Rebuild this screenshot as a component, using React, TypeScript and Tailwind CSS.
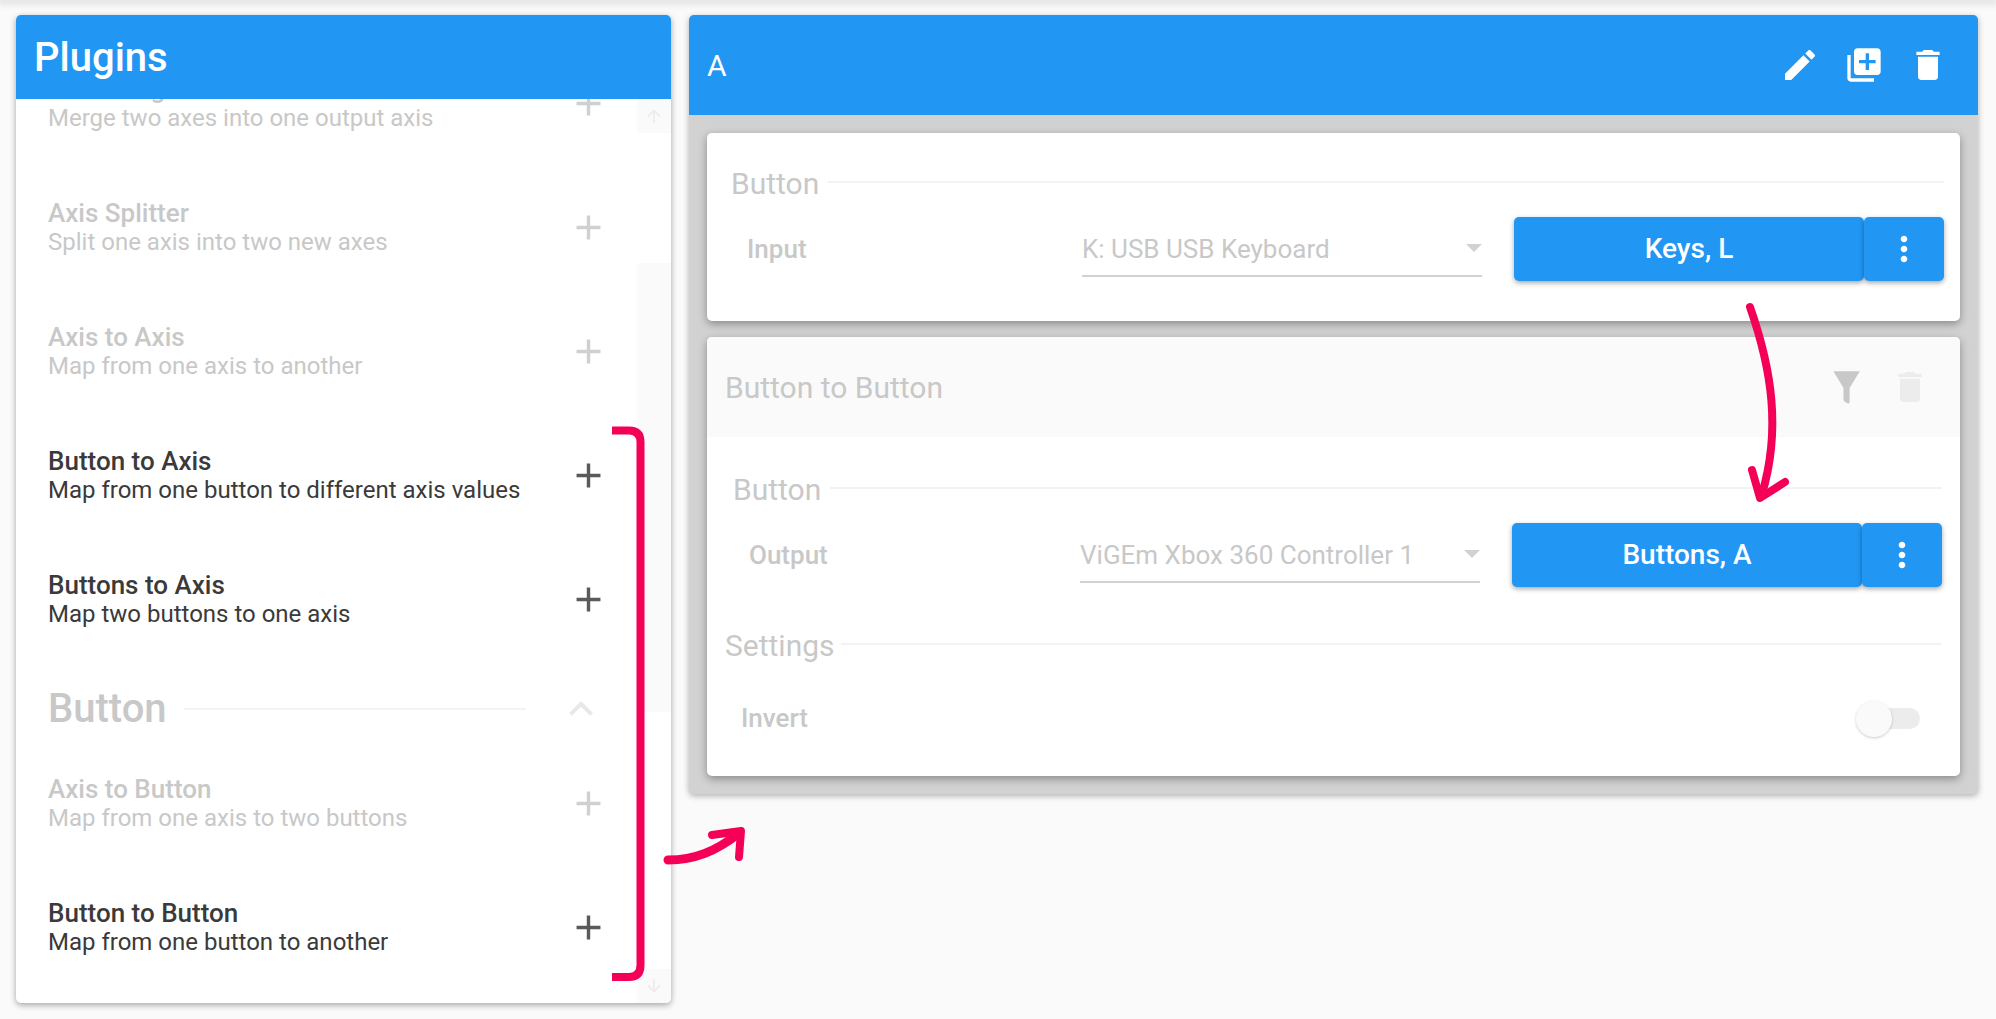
import React from 'react';

const ROBOTO = "font-['Roboto',sans-serif]";

function Glyph({ d, size = 40, className = '' }: { d: string; size?: number; className?: string }) {
    return (
        <svg width={size} height={size} viewBox="0 0 24 24" fill="currentColor" className={`shrink-0 ${className}`}>
            <path d={d} />
        </svg>
    );
}

const ICONS = {
    add: 'M19 13h-6v6h-2v-6H5v-2h6V5h2v6h6v2z',
    edit: 'M3 17.25V21h3.75L17.81 9.94l-3.75-3.75L3 17.25zM20.71 7.04c.39-.39.39-1.02 0-1.41l-2.34-2.34c-.39-.39-1.02-.39-1.41 0l-1.83 1.83 3.75 3.75 1.83-1.83z',
    libraryAdd: 'M4 6H2v14c0 1.1.9 2 2 2h14v-2H4V6zm16-4H8c-1.1 0-2 .9-2 2v12c0 1.1.9 2 2 2h12c1.1 0 2-.9 2-2V4c0-1.1-.9-2-2-2zm-1 9h-4v4h-2v-4H9V9h4V5h2v4h4v2z',
    trash: 'M6 19c0 1.1.9 2 2 2h8c1.1 0 2-.9 2-2V7H6v12zM19 4h-3.5l-1-1h-5l-1 1H5v2h14V4z',
    filter: 'M4.2 3L10 12.5v6.6c0 .6.4 1.1.9 1.4l1.9 1c.5-.3.7-.8.7-1.4v-7.6L19.3 3z',
    dots: 'M12 8c1.1 0 2-.9 2-2s-.9-2-2-2-2 .9-2 2 .9 2 2 2zm0 2c-1.1 0-2 .9-2 2s.9 2 2 2 2-.9 2-2-.9-2-2-2zm0 6c-1.1 0-2 .9-2 2s.9 2 2 2 2-.9 2-2-.9-2-2-2z',
    chevronUp: 'M12 8l-6 6 1.41 1.41L12 10.83l4.59 4.58L18 14z',
    arrowUp: 'M4 12l1.41 1.41L11 7.83V20h2V7.83l5.58 5.59L20 12l-8-8-8 8z',
    arrowDown: 'M20 12l-1.41-1.41L13 16.17V4h-2v12.17l-5.58-5.59L4 12l8 8 8-8z',
};

function PluginRow({ title, text, active = false }: { title: string; text: string; active?: boolean }) {
    return (
        <div className="flex h-[124px] shrink-0 items-center pl-[32px] pr-[28px]">
            <div className={`min-w-0 flex-1 pt-[2px] text-[24px] leading-[29px] ${active ? 'text-[#3a3a3a]' : 'text-[#c8c8c8]'}`}>
                <p className="text-[26px] font-medium">{title}</p>
                <p>{text}</p>
            </div>
            <Glyph d={ICONS.add} size={41} className={active ? 'text-[#5a5a5a]' : 'text-[#d0d0d0]'} />
        </div>
    );
}

function PluginList() {
    return (
        <div className="flex min-h-0 flex-1 overflow-hidden">
            <div className="-mt-[58px] min-w-0 flex-1">
                <PluginRow title="Axis Merge" text="Merge two axes into one output axis" />
                <PluginRow title="Axis Splitter" text="Split one axis into two new axes" />
                <PluginRow title="Axis to Axis" text="Map from one axis to another" />
                <PluginRow title="Button to Axis" text="Map from one button to different axis values" active />
                <PluginRow title="Buttons to Axis" text="Map two buttons to one axis" active />
                <div className="flex h-[80px] items-center pb-[8px] pl-[32px] pr-[16px] pt-[24px]">
                    <span className="text-[40px] font-medium leading-[48px] text-[#c8c8c8]">Button</span>
                    <div className="ml-[17px] h-[2px] w-[342px] bg-[#f3f3f3]" />
                    <Glyph d={ICONS.chevronUp} size={48} className="ml-[31px] text-[#e8e8e8]" />
                </div>
                <PluginRow title="Axis to Button" text="Map from one axis to two buttons" />
                <PluginRow title="Button to Button" text="Map from one button to another" active />
            </div>
            <div className="flex w-[34px] shrink-0 flex-col">
                <div className="flex h-[34px] items-center justify-center bg-[#fafafa]">
                    <Glyph d={ICONS.arrowUp} size={20} className="text-[#ececec]" />
                </div>
                <div className="h-[130px] bg-white" />
                <div className="flex-1 bg-[#fafafa]" />
                <div className="h-[257px] bg-white" />
                <div className="flex h-[34px] items-center justify-center bg-[#fafafa]">
                    <Glyph d={ICONS.arrowDown} size={20} className="text-[#ececec]" />
                </div>
            </div>
        </div>
    );
}

function SectionTitle({ label, className = '', lineClass = 'ml-[9px]' }: { label: string; className?: string; lineClass?: string }) {
    return (
        <div className={`flex items-center ${className}`}>
            <span className="text-[30px] leading-[36px] text-[#c8c8c8]">{label}</span>
            <div className={`h-[2px] flex-1 -translate-y-[2px] bg-[#f3f3f3] ${lineClass}`} />
        </div>
    );
}

function DeviceRow({ label, device, action, labelClass }: { label: string; device: string; action: string; labelClass: string }) {
    return (
        <div className="flex h-[64px] items-start">
            <span className={`text-[26px] font-medium leading-[64px] text-[#c8c8c8] ${labelClass}`}>{label}</span>
            <div className="relative flex h-[60px] w-[400px] shrink-0 items-center border-b-2 border-[#d2d2d2] pt-[7px]">
                <span className="text-[26px] text-[#c8c8c8]">{device}</span>
                <div className="absolute right-0 top-[27px] h-0 w-0 border-x-8 border-t-8 border-x-transparent border-t-[#d2d2d2]" />
            </div>
            <button className="ml-[32px] h-[64px] flex-1 rounded-[5px] bg-[#2196f3] text-[28px] font-medium text-white shadow-[0_2px_5px_rgba(0,0,0,0.35)]">
                {action}
            </button>
            <button className="flex h-[64px] w-[80px] items-center justify-center rounded-[5px] bg-[#2196f3] text-white shadow-[0_2px_5px_rgba(0,0,0,0.35)]">
                <Glyph d={ICONS.dots} size={40} />
            </button>
        </div>
    );
}

function Annotations() {
    return (
        <svg
            width="1996"
            height="1019"
            viewBox="0 0 1996 1019"
            fill="none"
            stroke="#f50057"
            strokeLinecap="round"
            strokeLinejoin="round"
            className="pointer-events-none absolute left-0 top-0"
        >
            <path d="M612 430.5H629Q640.5 430.5 640.5 442V965Q640.5 977 629 977H612" strokeWidth="8" strokeLinecap="butt" />
            <path d="M668 860C695 860 716 851 738 834" strokeWidth="9" />
            <path d="M712 835L741 831L739 857" strokeWidth="8" />
            <path d="M1750 307C1772 370 1781 430 1762 494" strokeWidth="8" />
            <path d="M1752 470L1760 498L1785 482" strokeWidth="8" />
        </svg>
    );
}

export default function App() {
    return (
        <div className={`relative h-[1019px] overflow-hidden bg-[#fafafa] ${ROBOTO}`}>
            <div className="h-0 shadow-[0_0_8px_3px_rgba(0,0,0,0.15)]" />
            <div className="flex items-start gap-[18px] pl-[16px] pt-[15px]">
                {/* Plugins */}
                <div className="flex h-[988px] w-[655px] flex-col overflow-hidden rounded-[5px] bg-white shadow-[0_2px_6px_rgba(0,0,0,0.35)]">
                    <div className="flex h-[84px] shrink-0 items-center bg-[#2196f3] pl-[18px] pt-[2px] text-[40px] font-medium text-white">
                        Plugins
                    </div>
                    <PluginList />
                </div>

                {/* Profile */}
                <div className="w-[1289px] overflow-hidden rounded-[5px] bg-[#d2d2d2] shadow-[0_2px_6px_rgba(0,0,0,0.3)]">
                    <div className="flex h-[100px] items-center bg-[#2196f3] pl-[18px] pr-[30px] text-white">
                        <span className="flex-1 pt-[1px] text-[30px]">A</span>
                        <div className="flex gap-[24px]">
                            <Glyph d={ICONS.edit} />
                            <Glyph d={ICONS.libraryAdd} />
                            <Glyph d={ICONS.trash} />
                        </div>
                    </div>
                    <div className="flex flex-col gap-[16px] p-[18px]">
                        <div className="h-[188px] rounded-[5px] bg-white pl-[24px] pr-[16px] pt-[33px] shadow-[0_3px_8px_rgba(0,0,0,0.35)]">
                            <SectionTitle label="Button" />
                            <div className="mt-[15px] pl-[16px]">
                                <DeviceRow label="Input" device="K: USB USB Keyboard" action="Keys, L" labelClass="w-[335px]" />
                            </div>
                        </div>
                        <div className="h-[439px] overflow-hidden rounded-[5px] bg-white shadow-[0_3px_8px_rgba(0,0,0,0.35)]">
                            <div className="flex h-[100px] items-center bg-[#fafafa] pl-[18px] pr-[30px]">
                                <span className="flex-1 pt-[1px] text-[30px] text-[#c8c8c8]">Button to Button</span>
                                <div className="flex items-center gap-[22px]">
                                    <Glyph d={ICONS.filter} size={42} className="text-[#c8c8c8]" />
                                    <Glyph d={ICONS.trash} size={40} className="text-[#ececec]" />
                                </div>
                            </div>
                            <div className="pl-[18px] pr-[18px]">
                                <SectionTitle label="Button" className="ml-[8px] mt-[35px]" />
                                <div className="ml-[24px] mt-[15px]">
                                    <DeviceRow label="Output" device="ViGEm Xbox 360 Controller 1" action="Buttons, A" labelClass="w-[331px]" />
                                </div>
                                <SectionTitle label="Settings" className="mt-[41px]" lineClass="ml-[6px]" />
                                <div className="mt-[35px] flex items-center pl-[16px]">
                                    <span className="flex-1 text-[26px] font-medium text-[#c8c8c8]">Invert</span>
                                    <div className="mr-[22px] flex items-center">
                                        <div className="z-10 h-[36px] w-[36px] rounded-full bg-[#fafafa] shadow-[0_1px_3px_rgba(0,0,0,0.2)]" />
                                        <div className="-ml-[22px] h-[21px] w-[50px] rounded-full bg-[#ececec]" />
                                    </div>
                                </div>
                            </div>
                        </div>
                    </div>
                </div>
            </div>
            <Annotations />
        </div>
    );
}
